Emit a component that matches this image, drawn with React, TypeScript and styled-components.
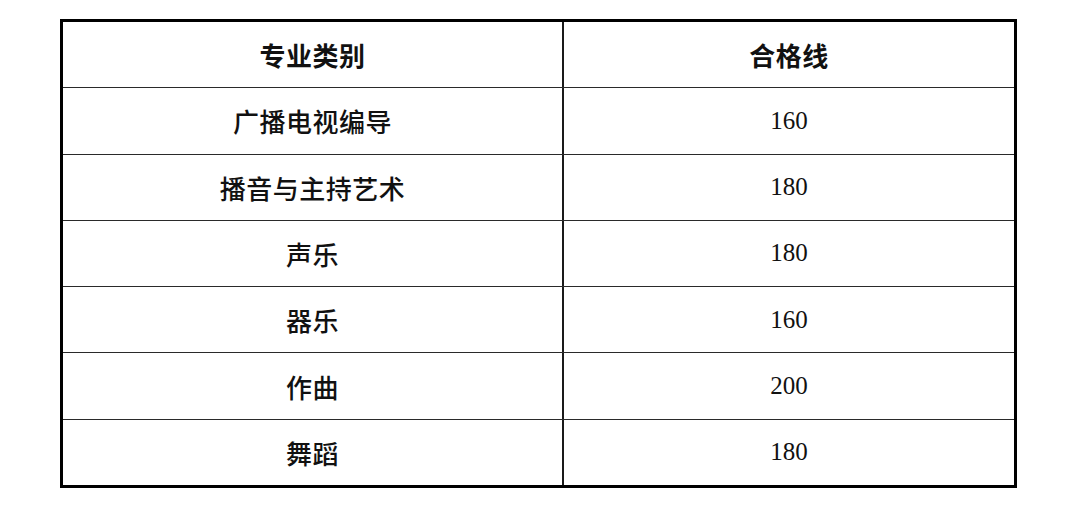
import React from 'react';
import styled, { createGlobalStyle } from 'styled-components';

const GlobalStyle = createGlobalStyle`
  html, body {
    margin: 0;
    padding: 0;
    background: #ffffff;
  }
`;

const Page = styled.div`
  width: 1080px;
  height: 514px;
  box-sizing: border-box;
  padding: 19px 0 0 60px;
  background: #ffffff;
`;

const Table = styled.div`
  width: 957px;
  height: 469px;
  box-sizing: border-box;
  border: 3px solid #000;
  display: flex;
  flex-direction: column;
`;

const Row = styled.div<{ isLast?: boolean }>`
  flex: 1;
  display: grid;
  grid-template-columns: 501px 1fr;
  border-bottom: ${(props) => (props.isLast ? 'none' : '1px solid #2a2a2a')};
`;

const Cell = styled.div<{ isHead?: boolean; isNumber?: boolean; isLeft?: boolean }>`
  display: flex;
  align-items: center;
  justify-content: center;
  color: #111;
  border-right: ${(props) => (props.isLeft ? '2px solid #1a1a1a' : 'none')};
  font-family: ${(props) =>
    props.isNumber
      ? '"Liberation Serif", "Noto Sans CJK SC", serif'
      : '"Noto Sans CJK SC", "Noto Sans", sans-serif'};
  font-size: ${(props) => (props.isNumber ? '25px' : '26px')};
  font-weight: ${(props) => (props.isHead ? 700 : 500)};
  letter-spacing: ${(props) => (props.isNumber ? '0' : '0.5px')};
`;

const rows: { major: string; score: string }[] = [
  { major: '广播电视编导', score: '160' },
  { major: '播音与主持艺术', score: '180' },
  { major: '声乐', score: '180' },
  { major: '器乐', score: '160' },
  { major: '作曲', score: '200' },
  { major: '舞蹈', score: '180' },
];

const App: React.FC = () => {
  return (
    <>
      <GlobalStyle />
      <Page>
        <Table>
          <Row>
            <Cell isHead isLeft>
              专业类别
            </Cell>
            <Cell isHead>合格线</Cell>
          </Row>
          {rows.map((item, index) => (
            <Row key={item.major} isLast={index === rows.length - 1}>
              <Cell isLeft>{item.major}</Cell>
              <Cell isNumber>{item.score}</Cell>
            </Row>
          ))}
        </Table>
      </Page>
    </>
  );
};

export default App;
